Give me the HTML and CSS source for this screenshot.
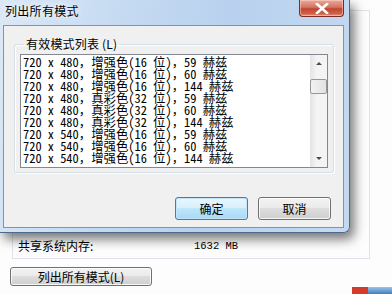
FILE: index.html
```html
<!DOCTYPE html>
<html>
<head>
<meta charset="utf-8">
<link rel="stylesheet" href="styles.css">
</head>
<body>
<div class="page">
  <div class="group-behind">
    <div class="mem-row">
      <span class="mem-label">共享系统内存:</span>
      <span class="mem-value">1632 MB</span>
    </div>
  </div>
  <button class="btn list-btn">列出所有模式(L)</button>
</div>

<div class="dialog">
  <div class="titlebar">
    <span class="title">列出所有模式</span>
    <span class="close">
      <svg width="14" height="11" viewBox="0 0 14 11"><path d="M2 1 L12 10 M12 1 L2 10" stroke="#fff" stroke-width="2.6" stroke-linecap="square" fill="none"/></svg>
    </span>
  </div>
  <div class="client">
    <fieldset class="group">
      <legend class="legend">有效模式列表 (L)</legend>
      <div class="listbox">
        <ul class="items">
          <li>720 x 480，增强色(16 位)，59 赫兹</li>
          <li>720 x 480，增强色(16 位)，60 赫兹</li>
          <li>720 x 480，增强色(16 位)，144 赫兹</li>
          <li>720 x 480，真彩色(32 位)，59 赫兹</li>
          <li>720 x 480，真彩色(32 位)，60 赫兹</li>
          <li>720 x 480，真彩色(32 位)，144 赫兹</li>
          <li>720 x 540，增强色(16 位)，59 赫兹</li>
          <li>720 x 540，增强色(16 位)，60 赫兹</li>
          <li>720 x 540，增强色(16 位)，144 赫兹</li>
        </ul>
        <div class="scrollbar">
          <span class="arrow up"></span>
          <span class="thumb"></span>
          <span class="track"></span>
          <span class="arrow down"></span>
        </div>
      </div>
    </fieldset>
    <div class="actions">
      <button class="btn default">确定</button>
      <button class="btn">取消</button>
    </div>
  </div>
</div>

<div class="logo"><span class="logo-a"></span><span class="logo-b"></span></div>
</body>
</html>
```

FILE: styles.css
```css
html, body {
  margin: 0;
  padding: 0;
}
body {
  width: 392px;
  height: 294px;
  overflow: hidden;
  position: relative;
  background: #fdfdfd;
  font-family: "Noto Sans CJK SC", "Liberation Sans", sans-serif;
  font-size: 12px;
  color: #000;
}

/* background property page */
.page {
  padding: 10px 0 0 10px;
}
.group-behind {
  margin-left: 2px;
  width: 358px;
  height: 249px;
  border: 1px solid #dde3e8;
  display: flex;
  flex-direction: column;
  justify-content: flex-end;
  box-sizing: border-box;
}
.mem-row {
  display: flex;
  padding: 0 0 6px 5px;
  line-height: 12px;
}
.mem-label {
  width: 176px;
}
.mem-value {
  font-family: "Liberation Mono", monospace;
  font-size: 10.5px;
}
.btn {
  font-family: "Noto Sans CJK SC", sans-serif;
  font-size: 12px;
  line-height: 14px;
  color: #000;
  border: 1px solid #707070;
  border-radius: 3px;
  background: linear-gradient(#f2f2f2 0%, #ebebeb 45%, #dddddd 50%, #cfcfcf 100%);
  box-shadow: inset 0 0 0 1px rgba(255,255,255,0.8);
  padding: 0;
  margin: 0;
}
.list-btn {
  display: block;
  margin-top: 8px;
  width: 142px;
  height: 19px;
}

/* dialog */
.dialog {
  position: absolute;
  left: 0;
  top: 0;
  width: 350px;
  height: 233px;
  box-sizing: border-box;
  border: 1px solid #4b6a8c;
  border-top: none;
  border-left: none;
  border-radius: 0 0 6px 0;
  background: linear-gradient(100deg, #dbe8f6 0%, #c6dbf2 30%, #b9d1ee 60%, #c4d9f1 100%);
  box-shadow: 4px 6px 12px rgba(0,0,0,0.55);
  padding: 0 5px 4px 3px;
  display: flex;
  flex-direction: column;
}
.titlebar {
  height: 25px;
  display: flex;
  justify-content: space-between;
  align-items: flex-start;
}
.title {
  margin: 4px 0 0 2px;
  line-height: 14px;
  letter-spacing: 0.3px;
  text-shadow: 0 0 6px rgba(255,255,255,0.8), 0 0 10px rgba(255,255,255,0.7);
}
.close {
  width: 45px;
  height: 17px;
  box-sizing: border-box;
  border: 1px solid #7d2a22;
  border-top: none;
  border-radius: 0 0 4px 4px;
  background: linear-gradient(#e9a99a 0%, #d47563 45%, #c24530 55%, #d0604a 85%, #e39b84 100%);
  box-shadow: inset 0 0 0 1px rgba(255,220,210,0.5);
  display: flex;
  align-items: center;
  justify-content: center;
}
.client {
  flex: 1;
  background: #f0f0f0;
  border: 1px solid #8094ad;
  position: relative;
}
.group {
  margin: 11px 9px 0 10px;
  padding: 0 5px 0 5px;
  height: 134px;
  border: 1px solid #d5dfe5;
  border-radius: 3px;
  box-shadow: inset 1px 1px 0 #fff, 1px 1px 0 #fff;
}
.legend {
  padding: 0 2px;
  margin-left: 4px;
  line-height: 14px;
  letter-spacing: 0.2px;
}
.listbox {
  margin-top: 3px;
  height: 112px;
  border: 1px solid #828790;
  background: #fff;
  display: flex;
}
.items {
  list-style: none;
  flex: 1;
  margin: 0;
  padding: 1px 0 0 2px;
  font-family: "Noto Sans Mono CJK SC", "Liberation Mono", "Noto Sans CJK SC", monospace;
  font-size: 12.4px;
  line-height: 12px;
  white-space: nowrap;
}
.scrollbar {
  width: 17px;
  display: flex;
  flex-direction: column;
  background: linear-gradient(90deg, #e4e4e4, #f4f4f4 40%, #f4f4f4);
}
.arrow {
  height: 17px;
  position: relative;
}
.arrow::after {
  content: "";
  position: absolute;
  left: 6px;
  width: 0;
  height: 0;
  border-left: 3px solid transparent;
  border-right: 3px solid transparent;
}
.arrow.up::after {
  top: 7px;
  border-bottom: 3px solid #4d4d4d;
}
.arrow.down::after {
  top: 7px;
  border-top: 3px solid #4d4d4d;
}
.thumb {
  margin: 7px 0 0 0;
  height: 15px;
  box-sizing: border-box;
  border: 1px solid #979797;
  border-radius: 2px;
  background: linear-gradient(90deg, #f2f2f2, #e2e2e2);
}
.track {
  flex: 1;
}
.actions {
  display: flex;
  justify-content: flex-end;
  gap: 10px;
  margin: 24px 12px 0 0;
}
.actions .btn {
  width: 73px;
  height: 23px;
}
.btn.default {
  border-color: #3c7fb1;
  background: linear-gradient(#eaf6fd 0%, #d9f0fc 45%, #bee6fd 50%, #a7d9f5 100%);
  box-shadow: inset 0 0 0 1px #c4e4f8;
}

/* watermark logo */
.logo {
  position: absolute;
  right: 0;
  bottom: 0;
  width: 40px;
  height: 7px;
  display: flex;
  background: linear-gradient(#9fc3e8, #3f7cc4);
}
.logo-a {
  width: 16px;
  background: #d23c2c;
}
.logo-b {
  flex: 1;
}
```
